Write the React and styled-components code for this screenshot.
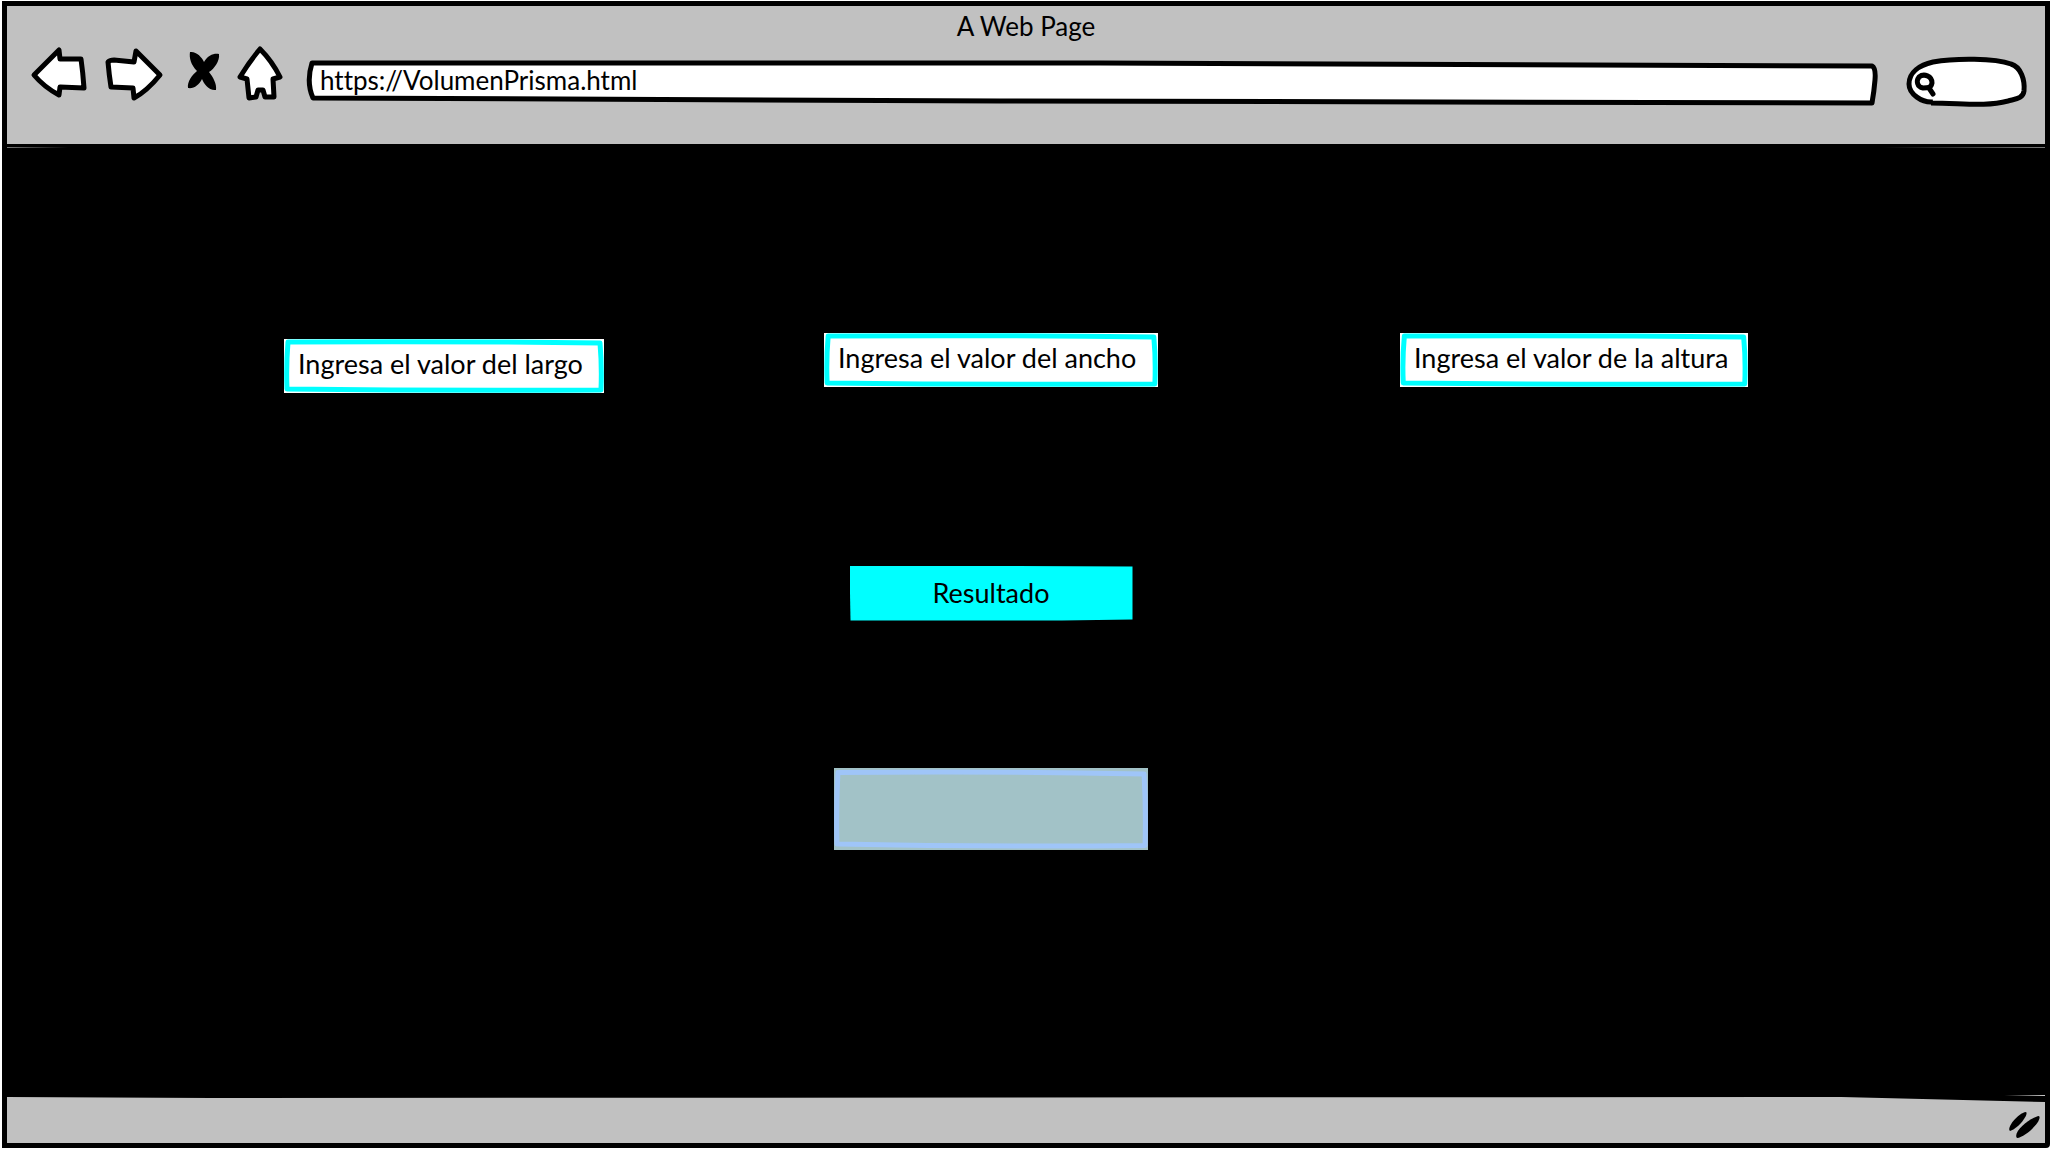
import React from "react";
import styled, { createGlobalStyle } from "styled-components";

const GlobalStyle = createGlobalStyle`
  *, *::before, *::after { box-sizing: border-box; }
  body { margin: 0; background: #fff; }
  input, button, output { font: inherit; color: inherit; }
`;

const Page = styled.div`
  display: flex;
  min-height: 100vh;
  padding: 1px 2px 2px;
  color: #000;
  font-family: Lato, "Open Sans", sans-serif;
  font-size: 26px;
  font-variant-ligatures: none;
  line-height: 32px;
`;

const Window = styled.div`
  flex: 1;
  display: flex;
  flex-direction: column;
  border: 5px solid #000;
  border-bottom-right-radius: 4px;
  background: #000;
`;

const Header = styled.header`
  display: flex;
  flex-direction: column;
  gap: 4px;
  padding: 4px 0 36px;
  background: #c1c1c1;
`;

const Title = styled.h1`
  margin: 0;
  font-size: 26px;
  font-weight: 400;
  line-height: 32px;
  text-align: center;
`;

const Toolbar = styled.div`
  display: flex;
  gap: 16px;
  padding: 0 16px 0 23px;
`;

const NavButton = styled.button`
  display: flex;
  padding: 0;
  border: 0;
  background: none;
  cursor: pointer;
`;

const Glyph = styled.svg`
  display: block;
  fill: ${(p) => (p.$solid ? "#000" : "#fff")};
  stroke: ${(p) => (p.$solid ? "none" : "#000")};
  stroke-width: 5px;
  stroke-linejoin: round;
  stroke-linecap: round;
`;

const Layered = styled.div`
  display: grid;
  grid-template-rows: minmax(0, 1fr);
  flex: ${(p) => (p.$grow ? "1" : "none")};
  width: ${(p) => (p.$width ? `${p.$width}px` : "auto")};
  height: ${(p) => p.$height}px;
  align-self: ${(p) => p.$align || "start"};

  > * { grid-area: 1 / 1; min-width: 0; min-height: 0; }
`;

const Outline = styled.svg`
  display: block;
  width: 100%;
  height: 100%;
  overflow: visible;
  fill: ${(p) => p.$fill || "#fff"};
  stroke: ${(p) => p.$stroke || "#000"};
  stroke-width: 5px;
  stroke-linejoin: round;

  path { vector-effect: non-scaling-stroke; }
`;

const SketchPanel = styled(Outline)`
  background: ${(p) => p.$paper};
`;

const BareInput = styled.input`
  width: 100%;
  height: 100%;
  border: 0;
  outline: 0;
  background: transparent;
  padding: ${(p) => p.$pad};
`;

const Stage = styled.main`
  flex: 1;
  display: grid;
  grid-template-columns: 277fr auto 220fr auto 242fr auto 297fr;
  grid-template-rows: 189fr 60px 173fr auto 148fr auto 247fr;
  font-size: 27px;
  background:
    linear-gradient(90deg, #777, #000 3%, #000 92%, #777) 0 3px / 100% 1px no-repeat,
    linear-gradient(90deg, #000 98%, #ccc) 0 calc(100% - 1px) / 100% 1px no-repeat,
    #000;
`;

const Cell = styled.div`
  display: flex;
  grid-column: ${(p) => p.$col};
  grid-row: ${(p) => p.$row};
  justify-content: center;
`;

const ResultButton = styled.button`
  width: 283px;
  height: 55px;
  padding: 0;
  border: 0;
  background: #0ff;
  clip-path: polygon(0 0, 100% 1px, 100% 54px, 75% 100%, 1px 100%);
  cursor: pointer;
`;

const Footer = styled.footer`
  display: flex;
  justify-content: flex-end;
  height: 46px;
  background: #c1c1c1;
  clip-path: polygon(0 0, 10% 1px, 90% 0, 100% 5px, 100% 100%, 0 100%);
`;

const NAV = [
  {
    label: "Atrás",
    box: "30 46 58 62",
    width: 58,
    path: "M34 75 L59 50 L60 59 L81 59 Q83 73 84 88 L60 87 L59 95 Q44 87 34 75 Z",
  },
  {
    label: "Adelante",
    box: "104 46 60 62",
    width: 60,
    path: "M108 62 Q110 60 114 60 L134 62 L136 51 L160 75 Q147 91 134 98 L133 88 L111 87 Q109 74 108 62 Z",
  },
  {
    label: "Detener",
    box: "180 46 40 62",
    width: 40,
    solid: true,
    path: "M190 52 C196 51 202 57 204 62 C208 55 214 53 219 54 C220 61 214 69 209 72 C213 77 217 84 216 90 C209 91 204 84 202 79 C199 85 194 89 188 88 C187 82 192 75 197 71 C191 65 189 58 190 52 Z",
  },
  {
    label: "Inicio",
    box: "236 46 50 62",
    width: 50,
    path: "M260 49 Q272 61 280 77 L273 79 L274 97 L265 97 L263 90 L258 90 L256 97 L249 98 L247 79 L240 77 Q249 62 260 49 Z",
  },
];

const FIELDS = [
  { name: "largo", text: "Ingresa el valor del largo", width: 320, col: 2, align: "end" },
  { name: "ancho", text: "Ingresa el valor del ancho", width: 334, col: 4, align: "start" },
  { name: "altura", text: "Ingresa el valor de la altura", width: 348, col: 6, align: "start" },
];

function SketchBox({ fill, stroke }) {
  return (
    <SketchPanel
      viewBox="0 0 320 54"
      preserveAspectRatio="none"
      $fill="none"
      $stroke={stroke}
      $paper={fill}
      aria-hidden="true"
    >
      <path d="M4 3 Q160 2 316 4 Q318 27 317 51 Q160 52 3 50 Q2 27 4 3 Z" />
    </SketchPanel>
  );
}

export default function App() {
  return (
    <Page>
      <GlobalStyle />
      <Window>
        <Header>
          <Title>A Web Page</Title>
          <Toolbar>
            {NAV.map((n) => (
              <NavButton key={n.label} type="button" aria-label={n.label}>
                <Glyph viewBox={n.box} width={n.width} height="62" $solid={n.solid} aria-hidden="true">
                  <path d={n.path} />
                </Glyph>
              </NavButton>
            ))}
            <Layered $grow $height={62}>
              <Outline viewBox="302 46 1583 62" preserveAspectRatio="none" aria-hidden="true">
                <path d="M312 63 L1100 63 L1872 66 Q1876 68 1875 80 Q1874 92 1872 103 L1000 101 L313 98 Q306 82 312 63 Z" />
              </Outline>
              <BareInput aria-label="Dirección" defaultValue="https://VolumenPrisma.html" $pad="6px 16px 0 18px" />
            </Layered>
            <Layered $width={128} $height={62}>
              <Outline viewBox="1901 46 128 62" aria-hidden="true">
                <path d="M1933 102 C1922 103 1909 94 1909 84 C1909 72 1920 65 1933 62 C1955 58 1995 58 2011 64 C2021 67 2025 80 2024 91 C2023 99 2015 99 2008 101 C1985 107 1962 103 1931 103" />
                <path d="M1919 77 C1924 73 1932 76 1932 83 C1931 88 1928 88 1923 88 C1917 87 1916 81 1919 77 Z M1929 88 L1933 94" strokeLinecap="round" />
              </Outline>
              <BareInput type="text" aria-label="Buscar" $pad="6px 16px 0 38px" />
            </Layered>
          </Toolbar>
        </Header>
        <Stage>
          {FIELDS.map((f) => (
            <Cell key={f.name} $col={f.col} $row={2}>
              <Layered $width={f.width} $height={54} $align={f.align}>
                <SketchBox fill="#fff" stroke="#0ff" />
                <BareInput name={f.name} aria-label={f.text} defaultValue={f.text} $pad="0 0 4px 14px" />
              </Layered>
            </Cell>
          ))}
          <Cell $col={4} $row={4}>
            <ResultButton type="button">Resultado</ResultButton>
          </Cell>
          <Cell $col={4} $row={6}>
            <Layered as="output" aria-label="Resultado" $width={314} $height={82}>
              <SketchBox fill="#a2c2c7" stroke="#9fc5f8" />
            </Layered>
          </Cell>
        </Stage>
        <Footer>
          <Glyph viewBox="2005 1097 40 46" width="40" height="46" $solid aria-hidden="true">
            <path d="M2026 1112 C2029 1114 2019 1128 2010 1131 C2006 1128 2018 1113 2026 1112 Z" />
            <path d="M2039 1116 C2043 1120 2026 1137 2017 1138 C2012 1132 2031 1117 2039 1116 Z" />
          </Glyph>
        </Footer>
      </Window>
    </Page>
  );
}
